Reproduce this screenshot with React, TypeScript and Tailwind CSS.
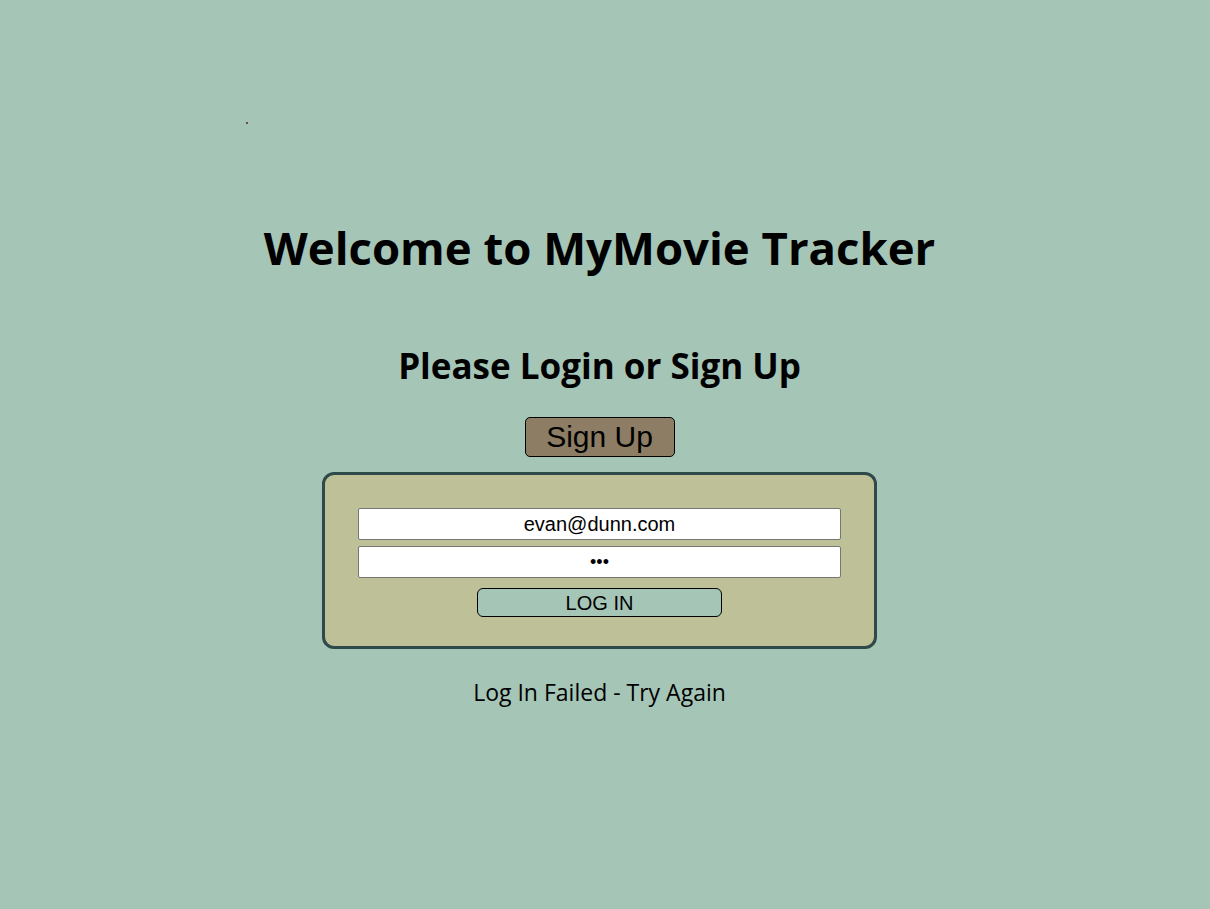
export default function App() {
    return (
        <div className="min-h-[909px] bg-[#a5c5b7] relative">
            {/* stray dot */}
            <div className="absolute left-[246px] top-[122px] w-[2px] h-[2px] bg-[#7a4a40]" />

            <div className="flex flex-col items-center pt-[217px] pr-[11px] font-['Open_Sans',sans-serif] text-black">
                <h1 className="text-[45.5px] font-bold leading-[60px]">
                    Welcome to MyMovie Tracker
                </h1>

                <h2 className="mt-[69px] text-[35px] font-bold leading-[40px]">
                    Please Login or Sign Up
                </h2>

                <button className="mt-[31px] w-[150px] h-[40px] bg-[#8c7d64] border border-black rounded-[5px] text-[30px] leading-none font-['Liberation_Sans',Arial,sans-serif]">
                    Sign Up
                </button>

                <div className="mt-[15px] w-[555px] h-[177px] bg-[#bec197] border-[3px] border-[#2e4a4a] rounded-[12px] flex flex-col items-center pt-[33px] font-['Liberation_Sans',Arial,sans-serif]">
                    <input
                        readOnly
                        value="evan@dunn.com"
                        className="w-[483px] h-[32px] bg-white border border-[#767676] rounded-[2px] text-center text-[20px] outline-none"
                    />
                    <input
                        readOnly
                        type="password"
                        value="abc"
                        className="mt-[6px] w-[483px] h-[32px] bg-white border border-[#767676] rounded-[2px] text-center text-[18px] outline-none"
                    />
                    <button className="mt-[10px] w-[245px] h-[29px] bg-[#a5c5b7] border border-black rounded-[6px] text-[20px] leading-none">
                        LOG IN
                    </button>
                </div>

                <p className="mt-[28px] text-[23px] leading-[30px]">
                    Log In Failed - Try Again
                </p>
            </div>
        </div>
    );
}
